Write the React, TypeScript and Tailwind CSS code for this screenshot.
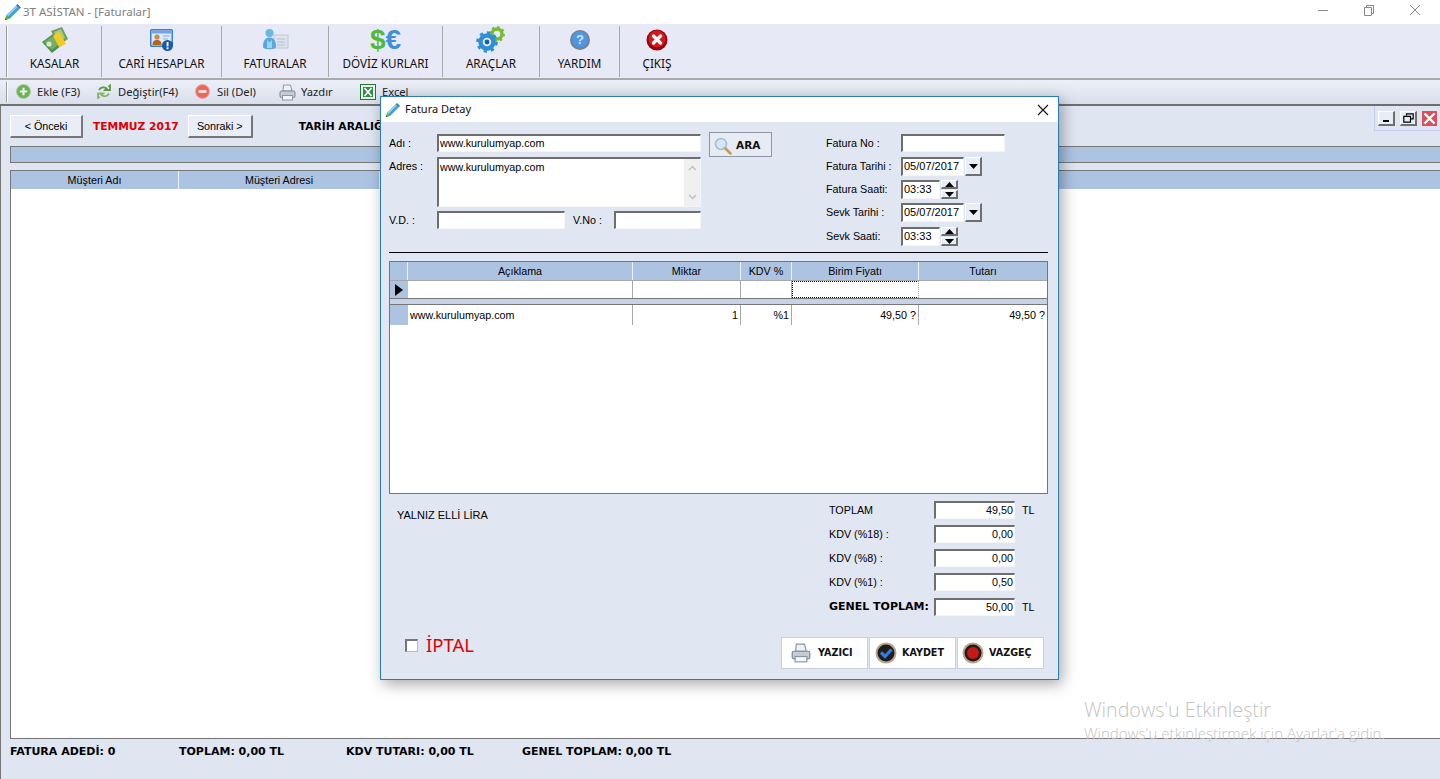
import React from "react";

const ui = "font-['Noto_Sans',sans-serif]";
const lib = "font-['Liberation_Sans',sans-serif]";
const bold = "font-['DejaVu_Sans',sans-serif] font-bold";

const Pencil = ({ s = 18 }: { s?: number }) => (
  <svg width={s} height={s} viewBox="0 0 18 18" className="shrink-0">
    <path d="M1 17l1.5-5L12 2.5l3.5 3.5L6 15.5z" fill="#3f9fdc" />
    <path d="M2.5 12L12 2.5l1.5 1.5L4 13.5z" fill="#8fd0f5" />
    <path d="M12 2.5l1.5-1.5 3.5 3.5L15.5 6z" fill="#2f7fb8" />
    <path d="M1 17l1.5-5 3.5 3.5z" fill="#6cb33f" />
    <path d="M1 17l.6-2 1.4 1.4z" fill="#2c5a1a" />
  </svg>
);

const Kasa = () => (
  <svg width="28" height="26" viewBox="0 0 28 26">
    <path d="M10 4l11-4 6 12-9 6z" fill="#6f9e5f" />
    <path d="M13 5l7-3 4 9-6 4z" fill="#a3c78c" />
    <path d="M1 15l11-8 9 11-10 8z" fill="#4f8f4c" />
    <path d="M3 15l9-6 6 8-7 6z" fill="#77ad68" />
    <path d="M12 9l6-5 7 13-7 3z" fill="#f2cb22" />
    <circle cx="8" cy="17" r="2.600" fill="#d6e8c8" />
  </svg>
);
const Cari = () => (
  <svg width="26" height="24" viewBox="0 0 26 24">
    <rect x="1" y="1" width="23" height="18" rx="1.5" fill="#3c7fd0" />
    <rect x="2.5" y="2.5" width="20" height="15" fill="#dce9f8" />
    <rect x="2.5" y="2.5" width="20" height="3" fill="#6ea6e4" />
    <circle cx="8" cy="9" r="2.6" fill="#c98a4a" />
    <path d="M3.5 17c0-4 2-5 4.5-5s4.5 1 4.5 5z" fill="#b0662b" />
    <path d="M14 8h7M14 11h5" stroke="#8fb4dd" strokeWidth="1.2" />
    <circle cx="18.5" cy="17.5" r="5.5" fill="#1a58a8" />
    <rect x="17.6" y="14" width="1.9" height="4.4" fill="#fff" />
    <rect x="17.6" y="19.3" width="1.9" height="1.9" fill="#fff" />
  </svg>
);
const Fatura = () => (
  <svg width="28" height="24" viewBox="0 0 28 24">
    <rect x="13" y="7" width="14" height="13" fill="#dde4ee" stroke="#bcc7d6" />
    <path d="M16 11h8M16 14h8M16 17h8" stroke="#b3c0d1" />
    <circle cx="8.500" cy="5" r="4" fill="#6db6e6" />
    <path d="M2 19c0-7 2.500-9.500 6.500-9.500S15 12 15 19c0 3-13 3-13 0z" fill="#57a9dd" />
    <path d="M6 11c1 4 4 4 5 0v9H6z" fill="#9ad2f2" />
  </svg>
);
const Araclar = () => (
  <svg width="30" height="28" viewBox="0 0 30 28">
    <circle cx="21" cy="8" r="5" fill="none" stroke="#77bb33" strokeWidth="3.4" />
    <circle cx="21" cy="8" r="7" fill="none" stroke="#77bb33" strokeWidth="2" strokeDasharray="2.4 3.1" />
    <circle cx="11" cy="16" r="6.5" fill="none" stroke="#2f8fd6" strokeWidth="4.4" />
    <circle cx="11" cy="16" r="9.5" fill="none" stroke="#2f8fd6" strokeWidth="2.6" strokeDasharray="3.4 4" />
    <circle cx="11" cy="16" r="2.4" fill="#1a5f9e" />
  </svg>
);
const Yardim = () => (
  <svg width="22" height="22" viewBox="0 0 22 22">
    <circle cx="11" cy="11" r="10" fill="#6f8296" />
    <circle cx="11" cy="10.500" r="8" fill="#4f97e2" />
    <text x="11" y="15" textAnchor="middle" fontSize="13" fontWeight="700" fill="#cfe6fb" fontFamily="Liberation Sans, sans-serif">?</text>
  </svg>
);
const Cikis = () => (
  <svg width="22" height="22" viewBox="0 0 22 22">
    <circle cx="11" cy="11" r="10.5" fill="#8f0a0e" />
    <circle cx="11" cy="10" r="8.500" fill="#d8161c" />
    <path d="M7.5 7l7 7M14.5 7l-7 7" stroke="#fff" strokeWidth="3.200" strokeLinecap="round" />
  </svg>
);
const Ekle = () => (
  <svg width="15" height="15" viewBox="0 0 15 15">
    <circle cx="7.5" cy="7.5" r="7" fill="#6fae5c" stroke="#a8d19a" />
    <path d="M7.5 3.8v7.4M3.8 7.5h7.4" stroke="#e8f5e2" strokeWidth="2.2" />
  </svg>
);
const Degistir = () => (
  <svg width="14" height="15" viewBox="0 0 14 15" fill="none">
    <path d="M2 6c1.500-3 5.500-3.500 7.500-1.500L8 6h5V1.500L11.500 3" stroke="#5c9c48" strokeWidth="1.800" />
    <path d="M12 9.500c-1.500 3-5.500 3.500-7.500 1.500L6 9.500H1V14l1.500-1.500" stroke="#86b662" strokeWidth="1.800" />
  </svg>
);
const Sil = () => (
  <svg width="15" height="15" viewBox="0 0 15 15">
    <circle cx="7.5" cy="7.5" r="7" fill="#e86a5c" stroke="#f2a79e" />
    <rect x="3.500" y="6.200" width="8" height="2.600" fill="#fbe9e6" />
  </svg>
);
const Printer = ({ w = 17 }: { w?: number }) => (
  <svg width={w} height={w} viewBox="0 0 17 17">
    <path d="M4.500 1h7l1.500 6H4z" fill="#eef2f7" stroke="#8b96a5" />
    <rect x="1" y="7" width="15" height="6.500" rx="1.500" fill="#c6ccd4" stroke="#7d8792" />
    <rect x="3.500" y="11.500" width="10" height="4.500" fill="#f4f6f8" stroke="#8b96a5" />
  </svg>
);
const Excel = () => (
  <svg width="16" height="16" viewBox="0 0 16 16">
    <rect x="0.500" y="0.500" width="15" height="15" fill="#e8f3e8" stroke="#1d7a35" />
    <path d="M3 3h10v10H3z" fill="#2d8c46" />
    <path d="M4.500 4l7 8M11.500 4l-7 8" stroke="#fff" strokeWidth="1.800" />
  </svg>
);
const Search = () => (
  <svg width="18" height="18" viewBox="0 0 18 18">
    <circle cx="7" cy="7" r="5.500" fill="#d5e6f6" stroke="#a5bcd3" strokeWidth="1.500" />
    <path d="M11.500 11.500l5 5" stroke="#c59a5a" strokeWidth="2.600" strokeLinecap="round" />
  </svg>
);
const Orb = ({ kind }: { kind: "ok" | "no" }) => (
  <svg width="22" height="22" viewBox="0 0 22 22">
    <circle cx="11" cy="11" r="10.500" fill="#b9a48c" />
    <circle cx="11" cy="11" r="8.500" fill="#1d1d1d" />
    {kind === "ok" ? (
      <path d="M6 10.500l4 4 6.500-7" stroke="#2e7de0" strokeWidth="3.200" fill="none" />
    ) : (
      <circle cx="11" cy="11" r="6" fill="#c81818" />
    )}
  </svg>
);

const Arrow = ({ up }: { up?: boolean }) => (
  <svg width="9" height="5" viewBox="0 0 9 5">
    <path d={up ? "M4.500 0L9 5H0z" : "M0 0h9L4.500 5z"} fill="#000" />
  </svg>
);

const Sunken = ({ className = "", children }: { className?: string; children?: React.ReactNode }) => (
  <div className={`bg-white border-t-2 border-l-2 border-t-[#6e6e6e] border-l-[#6e6e6e] border-b border-r border-b-[#f3f5fa] border-r-[#f3f5fa] pl-px text-[10.75px] leading-[14px] text-black overflow-hidden ${className}`}>
    {children}
  </div>
);

const Raised = ({ className = "", children }: { className?: string; children?: React.ReactNode }) => (
  <div className={`flex items-center justify-center bg-[#e9edf5] border-t border-l border-t-white border-l-white border-b-2 border-r-2 border-b-[#6f6f6f] border-r-[#6f6f6f] ${className}`}>
    {children}
  </div>
);

const DateRow = ({ label, value }: { label: string; value: string }) => (
  <div className="flex items-center h-[19px]">
    <span className="w-[75px] text-[10.75px] text-black">{label}</span>
    <Sunken className="w-[63px] h-[19px] !text-[11px]">{value}</Sunken>
    <Raised className="w-[17px] h-[19px] ml-px"><Arrow /></Raised>
  </div>
);

const TimeRow = ({ label, value }: { label: string; value: string }) => (
  <div className="flex items-center h-[19px]">
    <span className="w-[75px] text-[10.75px] text-black">{label}</span>
    <Sunken className="w-[39px] h-[19px] pl-[2px] !text-[11px]">{value}</Sunken>
    <div className="flex flex-col ml-px">
      <Raised className="w-[17px] h-[9px]"><Arrow up /></Raised>
      <Raised className="w-[17px] h-[9px] mt-px"><Arrow /></Raised>
    </div>
  </div>
);

const TotalRow = ({ label, value, unit, strong, className = "" }: { label: string; value: string; unit?: string; strong?: boolean; className?: string }) => (
  <div className={`flex items-center h-[18px] ${className}`}>
    <span className={`w-[105px] ${strong ? `${bold} text-[11px]` : "text-[10.75px]"} text-black whitespace-nowrap`}>{label}</span>
    <Sunken className="w-[81px] h-[18px] text-right pr-px">{value}</Sunken>
    {unit && <span className="ml-[7px] text-[10.75px] text-black">{unit}</span>}
  </div>
);

const Head = ({ children, className = "" }: { children?: React.ReactNode; className?: string }) => (
  <div className={`flex items-center justify-center bg-[#adc3e2] border-r border-r-[#eef2f9] text-[10.75px] text-black ${className}`}>{children}</div>
);

const Cell = ({ children, className = "" }: { children?: React.ReactNode; className?: string }) => (
  <div className={`flex items-center bg-white border-r border-r-[#a8a8a8] text-[10.75px] text-black px-[2px] overflow-hidden ${className}`}>{children}</div>
);

const gridCols = "grid grid-cols-[18px_225px_108px_51px_127px_128px]";

const ActionBtn = ({ icon, label, cls }: { icon: React.ReactNode; label: string; cls: string }) => (
  <div className={`w-[87px] h-[32px] flex items-center bg-white border border-[#c9d0dc] ${cls}`}>
    {icon}
    <span className={`${bold} pt-px text-[9.6px] text-[#111]`}>{label}</span>
  </div>
);

const tools = [
  { w: "w-[94px]", label: "KASALAR", icon: <Kasa />, sep: true },
  { w: "w-[120px]", label: "CARİ HESAPLAR", icon: <Cari />, sep: true },
  { w: "w-[107px]", label: "FATURALAR", icon: <Fatura />, sep: true },
  { w: "w-[114px]", label: "DÖVİZ KURLARI", icon: (
    <span className="font-['Liberation_Sans',sans-serif] font-bold text-[28px] leading-[26px]">
      <span className="text-[#53b83a]">$</span><span className="text-[#3f8fe0]">€</span>
    </span>
  ), sep: true },
  { w: "w-[97px]", label: "ARAÇLAR", icon: <Araclar />, sep: true },
  { w: "w-[80px]", label: "YARDIM", icon: <Yardim />, sep: true },
  { w: "w-[74px]", label: "ÇIKIŞ", icon: <Cikis />, sep: false },
];

const sub = [
  { w: "w-[81px]", label: "Ekle (F3)", icon: <Ekle />, gap: "gap-[6px]" },
  { w: "w-[98px]", label: "Değiştir(F4)", icon: <Degistir />, gap: "gap-[7px]" },
  { w: "w-[84px]", label: "Sil (Del)", icon: <Sil />, gap: "gap-[7px]" },
  { w: "w-[81px]", label: "Yazdır", icon: <Printer />, gap: "gap-[5px]" },
  { w: "w-[60px]", label: "Excel", icon: <Excel />, gap: "gap-[6px]" },
];

export default function App() {
  return (
    <div className={`relative w-[1440px] h-[779px] overflow-hidden bg-white flex flex-col ${ui}`}>
      {/* title bar */}
      <div className="h-[24px] flex items-center pl-[4px] pr-[2px] bg-white shrink-0">
        <Pencil />
        <span className="ml-[1px] text-[11.5px] text-[#808080]">3T ASİSTAN - [Faturalar]</span>
        <div className="ml-auto flex items-center">
          <svg width="46" height="24" viewBox="0 0 46 24"><path d="M18 10.500h10" stroke="#888" /></svg>
          <svg width="46" height="24" viewBox="0 0 46 24" fill="none"><path d="M18.500 7.500h7v8h-7zM20.500 7V5.500h7v8H26" stroke="#888" /></svg>
          <svg width="46" height="24" viewBox="0 0 46 24" fill="none"><path d="M18 5l10 10M28 5L18 15" stroke="#888" /></svg>
        </div>
      </div>

      {/* main toolbar */}
      <div className="h-[56px] shrink-0 flex bg-[#e7eaf6] border-b-2 border-b-[#a9a9a9] pl-[6px] pt-[2px] pb-[1px]">
        <div className="w-[2px] border-l border-l-[#9a9a9a] bg-white" />
        {tools.map((t) => (
          <div key={t.label} className={`${t.w} flex flex-col items-center justify-end pb-[5px] ${t.sep ? "border-r border-r-[#a9a9a9]" : ""}`}>
            <div className="h-[29px] flex items-center">{t.icon}</div>
            <span className="text-[11.7px] leading-[18px] text-[#111] whitespace-nowrap">{t.label}</span>
          </div>
        ))}
      </div>

      {/* secondary toolbar */}
      <div className="h-[26px] shrink-0 flex items-center bg-gradient-to-b from-[#eceff8] to-[#d9dfec] border-b-2 border-b-[#6f6f6f] pl-[6px]">
        <div className="w-[2px] h-[20px] border-l border-l-[#9a9a9a] bg-white mr-[8px]" />
        {sub.map((s) => (
          <div key={s.label} className={`${s.w} flex items-center ${s.gap} shrink-0`}>
            {s.icon}
            <span className="text-[11.2px] text-[#222] whitespace-nowrap">{s.label}</span>
          </div>
        ))}
      </div>

      {/* content */}
      <div className={`relative flex-1 flex flex-col bg-[#dfe5f1] border-l border-l-[#777] pl-[9px] min-h-0 ${lib}`}>
        <div className="flex items-center h-[23px] mt-[9px] shrink-0">
          <div className="w-[73px] h-[23px] flex items-center justify-center bg-[#e9edf5] border border-t-white border-l-white border-b-2 border-r-2 border-b-[#777] border-r-[#777] text-[10.75px] text-black">&lt; Önceki</div>
          <span className={`${bold} ml-[10px] mt-[2px] text-[10.7px] text-[#e00000] whitespace-nowrap`}>TEMMUZ 2017</span>
          <div className="ml-[9px] w-[65px] h-[23px] flex items-center justify-center bg-[#e9edf5] border border-t-white border-l-white border-b-2 border-r-2 border-b-[#777] border-r-[#777] text-[10.75px] text-black">Sonraki &gt;</div>
          <span className={`${bold} ml-[46px] mt-[2px] text-[10.7px] text-black whitespace-nowrap`}>TARİH ARALIĞI</span>
        </div>
        <div className="h-[17px] mt-[8px] shrink-0 bg-[#adc3e2] border border-[#777] border-r-0" />
        <div className="flex-1 mt-[7px] bg-white border border-[#777] border-r-0 min-h-0 flex flex-col">
          <div className="h-[18px] flex shrink-0 bg-[#adc3e2]">
            <Head className="w-[168px]">Müşteri Adı</Head>
            <Head className="w-[201px]">Müşteri Adresi</Head>
            <div className="flex-1" />
          </div>
        </div>
        <div className="h-[40px] shrink-0 flex pt-[5px]">
          <span className={`${bold} w-[169px] text-[11px] text-black whitespace-nowrap`}>FATURA ADEDİ: 0</span>
          <span className={`${bold} w-[167px] text-[11px] text-black whitespace-nowrap`}>TOPLAM: 0,00 TL</span>
          <span className={`${bold} w-[176px] text-[11px] text-black whitespace-nowrap`}>KDV TUTARI: 0,00 TL</span>
          <span className={`${bold} text-[11px] text-black whitespace-nowrap`}>GENEL TOPLAM: 0,00 TL</span>
        </div>

        {/* MDI buttons */}
        <div className="absolute right-0 top-0 w-[66px] h-[25px] border-l border-b border-[#c5cdee] flex items-center gap-[5px] pl-[3px]">
          <Raised className="w-[17px] h-[15px] !items-end pb-[2px]"><div className="w-[6px] h-[2px] bg-black" /></Raised>
          <Raised className="w-[17px] h-[15px]">
            <svg width="11" height="10" viewBox="0 0 11 10" fill="none"><path d="M3.500 2.500V.8h6.700v5H8M.8 3.300h6.700v5.900H.8z" stroke="#000" strokeWidth="1.200" /></svg>
          </Raised>
          <div className="w-[15px] h-[15px] bg-[#d9505a] flex items-center justify-center">
            <svg width="13" height="13" viewBox="0 0 13 13"><path d="M1.500 1.500l10 10M11.500 1.500l-10 10" stroke="#fff" strokeWidth="2.400" /></svg>
          </div>
        </div>
      </div>

      {/* activation watermark */}
      <div className="absolute left-[1084px] top-[697px] text-[#c4c4c4] font-['Open_Sans',sans-serif] pointer-events-none whitespace-nowrap">
        <div className="text-[19.7px] leading-[26px] font-light">Windows'u Etkinleştir</div>
        <div className="text-[15.1px] leading-[20px] font-light">Windows'u etkinleştirmek için Ayarlar'a gidin.</div>
      </div>

      {/* dialog */}
      <div className={`absolute left-[380px] top-[96px] w-[679px] h-[584px] flex flex-col bg-[#e0e6f2] border border-[#2b7cb5] shadow-[3px_4px_14px_rgba(0,0,0,0.35)] ${lib}`}>
        <div className={`h-[25px] shrink-0 flex items-center bg-white pl-[4px] ${ui}`}>
          <Pencil s={16} />
          <span className="ml-[4px] text-[11px] text-[#111]">Fatura Detay</span>
          <svg className="ml-auto mr-[9px]" width="12" height="12" viewBox="0 0 12 12"><path d="M1 1l10 10M11 1L1 11" stroke="#111" strokeWidth="1.100" /></svg>
        </div>

        <div className="flex items-start pl-[8px] pt-[12px] shrink-0">
          <div className="w-[312px] flex flex-col">
            <div className="flex items-center h-[18px]">
              <span className="w-[48px] text-[10.75px] text-black">Adı :</span>
              <Sunken className="w-[264px] h-[18px]">www.kurulumyap.com</Sunken>
            </div>
            <div className="flex items-start h-[50px] mt-[5px]">
              <span className="w-[48px] text-[10.75px] leading-[18px] text-black">Adres :</span>
              <Sunken className="relative w-[264px] h-[50px] pt-px">
                www.kurulumyap.com
                <div className="absolute right-0 top-0 bottom-0 w-[16px] bg-[#f0f0f0] flex flex-col items-center justify-between py-[6px]">
                  <svg width="9" height="6" viewBox="0 0 9 6" fill="none"><path d="M1 5l3.500-3.500L8 5" stroke="#c2c2c2" strokeWidth="1.500" /></svg>
                  <svg width="9" height="6" viewBox="0 0 9 6" fill="none"><path d="M1 1l3.500 3.500L8 1" stroke="#c2c2c2" strokeWidth="1.500" /></svg>
                </div>
              </Sunken>
            </div>
            <div className="flex items-center h-[18px] mt-[4px]">
              <span className="w-[48px] text-[10.75px] text-black">V.D. :</span>
              <Sunken className="w-[128px] h-[18px]" />
              <span className="ml-[8px] w-[41px] text-[10.75px] text-black whitespace-nowrap">V.No :</span>
              <Sunken className="w-[87px] h-[18px]" />
            </div>
          </div>
          <div className="ml-[8px] -mt-[2px] w-[63px] h-[25px] flex items-center gap-[4px] pl-[4px] pt-[2px] border border-[#8d96a5] bg-[#e6ebf4]">
            <Search />
            <span className={`${bold} text-[10.5px] text-[#111]`}>ARA</span>
          </div>
          <div className="ml-[54px] flex flex-col gap-[4px]">
            <div className="flex items-center h-[18px] mb-px">
              <span className="w-[75px] text-[10.75px] text-black">Fatura No :</span>
              <Sunken className="w-[104px] h-[18px]" />
            </div>
            <DateRow label="Fatura Tarihi :" value="05/07/2017" />
            <TimeRow label="Fatura Saati:" value="03:33" />
            <DateRow label="Sevk Tarihi :" value="05/07/2017" />
            <div className="mt-px"><TimeRow label="Sevk Saati:" value="03:33" /></div>
          </div>
        </div>

        <div className="h-px bg-black ml-[8px] mr-[10px] mt-[6px] shrink-0" />

        {/* grid */}
        <div className="ml-[8px] mr-[10px] mt-[8px] h-[233px] shrink-0 bg-white border border-[#6f7680] flex flex-col">
          <div className={`${gridCols} h-[18px] shrink-0`}>
            <Head />
            <Head>Açıklama</Head>
            <Head>Miktar</Head>
            <Head>KDV %</Head>
            <Head>Birim Fiyatı</Head>
            <Head className="border-r-0">Tutarı</Head>
          </div>
          <div className={`${gridCols} h-[19px] shrink-0 border-t border-t-[#a8a8a8] border-b border-b-[#777]`}>
            <div className="flex items-center justify-center bg-[#adc3e2]">
              <svg width="8" height="12" viewBox="0 0 8 12"><path d="M0 0l8 6-8 6z" fill="#000" /></svg>
            </div>
            <Cell />
            <Cell />
            <Cell />
            <Cell className="border border-dotted border-black" />
            <Cell className="border-r-0" />
          </div>
          <div className="h-[6px] bg-[#c5d2e8] border-b border-b-[#777] shrink-0" />
          <div className={`${gridCols} h-[20px] shrink-0`}>
            <div className="bg-[#adc3e2]" />
            <Cell>www.kurulumyap.com</Cell>
            <Cell className="justify-end">1</Cell>
            <Cell className="justify-end">%1</Cell>
            <Cell className="justify-end">49,50 ?</Cell>
            <Cell className="justify-end border-r-0">49,50 ?</Cell>
          </div>
        </div>

        {/* totals */}
        <div className="flex mt-[7px] shrink-0">
          <span className="ml-[16px] w-[432px] mt-[6px] text-[11px] leading-[16px] text-black">YALNIZ ELLİ LİRA</span>
          <div className="flex flex-col gap-[6px]">
            <TotalRow label="TOPLAM" value="49,50" unit="TL" />
            <TotalRow label="KDV (%18) :" value="0,00" />
            <TotalRow label="KDV (%8) :" value="0,00" />
            <TotalRow label="KDV (%1) :" value="0,50" />
            <TotalRow label="GENEL TOPLAM:" value="50,00" unit="TL" strong className="mt-px" />
          </div>
        </div>

        {/* footer */}
        <div className="flex items-start mt-[21px] shrink-0">
          <div className="ml-[24px] flex items-center">
            <div className="w-[13px] h-[13px] bg-white border-t-2 border-l-2 border-t-[#777] border-l-[#777] border-b border-r border-b-[#bbb] border-r-[#bbb]" />
            <span className={`ml-[8px] text-[18.5px] leading-[16px] text-[#e00000] ${ui}`}>İPTAL</span>
          </div>
          <div className="ml-auto mr-[14px] flex gap-px">
            <ActionBtn icon={<Printer w={20} />} label="YAZICI" cls="pl-[9px] gap-[7px]" />
            <ActionBtn icon={<Orb kind="ok" />} label="KAYDET" cls="pl-[5px] gap-[5px]" />
            <ActionBtn icon={<Orb kind="no" />} label="VAZGEÇ" cls="pl-[4px] gap-[5px]" />
          </div>
        </div>
      </div>
    </div>
  );
}
